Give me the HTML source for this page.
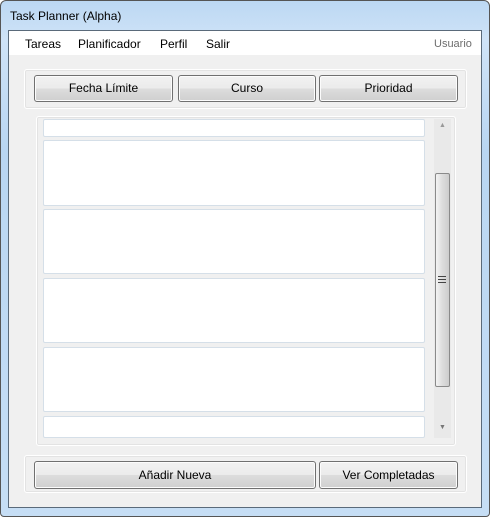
<!DOCTYPE html>
<html><head><style>
*{margin:0;padding:0;box-sizing:border-box}
body{width:490px;height:517px;background:#fff;font-family:"Liberation Sans",sans-serif;font-size:12px;color:#000;position:relative;overflow:hidden}
.a{position:absolute}
.frame{left:0;top:0;width:490px;height:517px;border:1px solid #555;border-radius:6px 6px 4px 4px;background:linear-gradient(180deg,#bcd8f3 0,#cfe3f7 40px,#b9d6f2 150px,#c6def5 100%)}
.title{left:10px;top:9px;font-size:12px;color:#000}
.client{left:8px;top:30px;width:474px;height:478px;border:1px solid #5a6a7a;background:#f0f0f0}
.menu{left:9px;top:31px;width:472px;height:24px;background:#fff}
.mi{top:37px;font-size:12px}
.grp{border:1px solid #fff;border-radius:3px;box-shadow:inset 0 0 0 1px #e3e3e3}
.btn{border:1px solid #707070;border-radius:3px;background:linear-gradient(#f2f2f2 0,#ebebeb 50%,#dddddd 50%,#cfcfcf 100%);text-align:center;font-size:12px;box-shadow:inset 0 0 0 1px #fcfcfc}
.item{left:43px;width:382px;background:#fff;border:1px solid #d5dfe8;border-radius:2px}
</style></head><body>
<div class="a frame"></div>
<div class="a title">Task Planner (Alpha)</div>
<div class="a client"></div>
<div class="a menu"></div>
<div class="a mi" style="left:25px">Tareas</div>
<div class="a mi" style="left:78px">Planificador</div>
<div class="a mi" style="left:160px">Perfil</div>
<div class="a mi" style="left:206px">Salir</div>
<div class="a mi" style="left:434px;color:#6d6d6d;font-size:11px;top:38px">Usuario</div>

<div class="a grp" style="left:24px;top:69px;width:443px;height:40px"></div>
<div class="a btn" style="left:34px;top:75px;width:139px;height:27px;line-height:25px">Fecha Límite</div>
<div class="a btn" style="left:178px;top:75px;width:138px;height:27px;line-height:25px">Curso</div>
<div class="a btn" style="left:319px;top:75px;width:139px;height:27px;line-height:25px">Prioridad</div>

<div class="a grp" style="left:36px;top:116px;width:420px;height:330px"></div>
<div class="a" style="left:40px;top:118px;width:412px;height:321px;background:#f0f0f0"></div>
<div class="a item" style="top:119px;height:18px"></div>
<div class="a item" style="top:140px;height:66px"></div>
<div class="a item" style="top:209px;height:65px"></div>
<div class="a item" style="top:278px;height:65px"></div>
<div class="a item" style="top:347px;height:65px"></div>
<div class="a item" style="top:416px;height:22px"></div>
<div class="a" style="left:434px;top:119px;width:17px;height:319px;background:#e9e9e9"></div>
<div class="a" style="left:439px;top:122px;color:#999;font-size:7px">▲</div>
<div class="a" style="left:439px;top:424px;color:#777;font-size:7px">▼</div>
<div class="a" style="left:435px;top:173px;width:15px;height:214px;border:1px solid #8a8a8a;border-radius:2px;background:linear-gradient(90deg,#f3f3f3,#dcdcdc 50%,#cdcdcd)"></div>
<div class="a" style="left:438px;top:276px;width:8px;height:7px;border-top:1px solid #444;border-bottom:1px solid #444"><div style="margin-top:2px;border-top:1px solid #444"></div></div>

<div class="a grp" style="left:24px;top:455px;width:443px;height:38px"></div>
<div class="a btn" style="left:34px;top:461px;width:282px;height:28px;line-height:26px">Añadir Nueva</div>
<div class="a btn" style="left:319px;top:461px;width:139px;height:28px;line-height:26px">Ver Completadas</div>
</body></html>
